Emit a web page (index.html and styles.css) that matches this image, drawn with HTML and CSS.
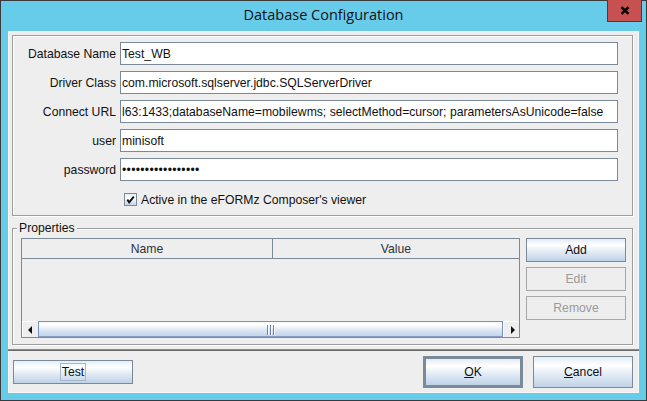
FILE: index.html
```html
<!DOCTYPE html>
<html lang="en">
<head>
<meta charset="utf-8">
<title>Database Configuration</title>
<link rel="stylesheet" href="styles.css">
</head>
<body>
<div class="window">
  <div class="titlebar">
    <div class="title">Database Configuration</div>
    <div class="close">
      <svg width="10" height="9" viewBox="0 0 10 9"><path d="M1.5 1.2 L8.5 7.8 M8.5 1.2 L1.5 7.8" stroke="#000" stroke-width="2.5" fill="none"/></svg>
    </div>
  </div>
  <div class="content">
    <div class="panel form-panel">
      <div class="form-grid">
        <div class="lbl">Database Name</div><div class="field">Test_WB</div>
        <div class="lbl">Driver Class</div><div class="field">com.microsoft.sqlserver.jdbc.SQLServerDriver</div>
        <div class="lbl">Connect URL</div><div class="field">l63:1433;databaseName=mobilewms; selectMethod=cursor; parametersAsUnicode=false</div>
        <div class="lbl">user</div><div class="field">minisoft</div>
        <div class="lbl">password</div><div class="field pw">•••••••••••••••••</div>
      </div>
      <div class="check-row">
        <div class="checkbox">
          <svg width="11" height="11" viewBox="0 0 11 11"><path d="M2.3 5.6 L4.2 8.4 L8.8 2.6" stroke="#111" stroke-width="1.9" fill="none"/></svg>
        </div>
        <span>Active in the eFORMz Composer's viewer</span>
      </div>
    </div>
    <div class="panel props-panel">
      <span class="panel-title">Properties</span>
      <div class="table">
        <div class="thead">
          <div class="th name">Name</div>
          <div class="th value">Value</div>
        </div>
        <div class="viewport"></div>
        <div class="hscroll">
          <div class="arrow"><span class="tri-left"></span></div>
          <div class="thumb"><span class="grip"></span><span class="grip"></span><span class="grip"></span></div>
          <div class="arrow"><span class="tri-right"></span></div>
        </div>
      </div>
      <div class="side">
        <div class="btn">Add</div>
        <div class="btn disabled">Edit</div>
        <div class="btn disabled">Remove</div>
      </div>
    </div>
    <div class="separator"></div>
    <div class="bottom-bar">
      <div class="btn test"><span class="focus">Test</span></div>
      <div class="spacer"></div>
      <div class="btn big default"><span><u>O</u>K</span></div>
      <div class="btn big"><span><u>C</u>ancel</span></div>
    </div>
  </div>
</div>
</body>
</html>
```

FILE: styles.css
```css
* { box-sizing: border-box; }
html, body { margin: 0; padding: 0; }
body {
  width: 647px;
  height: 401px;
  overflow: hidden;
  font-family: "Liberation Sans", Arial, sans-serif;
  font-size: 12.2px;
  color: #111111;
  background: #67cbea;
}
.window {
  width: 647px;
  height: 401px;
  border: 1px solid #3a3a3a;
  background: #67cbea;
  display: flex;
  flex-direction: column;
}
.titlebar {
  height: 30px;
  flex: none;
  display: grid;
  grid-template-columns: 1fr auto 1fr;
  align-items: start;
}
.title {
  grid-column: 2;
  font-family: "Open Sans", "Noto Sans", sans-serif;
  font-size: 14.5px;
  line-height: 28px;
  color: #111111;
  white-space: nowrap;
}
.close {
  grid-column: 3;
  justify-self: end;
  margin-top: -1px;
  margin-right: 4px;
  width: 35px;
  height: 22px;
  background: #c75050;
  border: 1px solid #473c3c;
  border-top: none;
  display: flex;
  align-items: center;
  justify-content: center;
}
.content {
  flex: 1;
  margin: 0 7px 7px;
  background: #eeeeee;
  box-shadow: inset 0 0 0 1px #f7f7f7;
  display: flex;
  flex-direction: column;
}
.panel {
  border: 1px solid #9d9d9d;
  box-shadow: inset 1px 1px 0 #ffffff, 1px 1px 0 #ffffff;
  margin: 0 6px 0 4px;
  flex: none;
}
.form-panel {
  margin-top: 4px;
  height: 181px;
  padding-top: 6px;
}
.form-grid {
  display: grid;
  grid-template-columns: 103px 498px;
  grid-auto-rows: 23px;
  column-gap: 4px;
  row-gap: 6px;
}
.lbl {
  text-align: right;
  line-height: 23px;
  padding-top: 1px;
  white-space: nowrap;
}
.field {
  background: #ffffff;
  border: 1px solid #7a8a99;
  padding: 0 2px 0 1px;
  line-height: 23px;
  height: 23px;
  white-space: nowrap;
  overflow: hidden;
}
.field.pw { letter-spacing: 0.3px; }
.check-row {
  display: flex;
  align-items: center;
  gap: 4px;
  margin-top: 12px;
  padding-left: 111px;
  height: 13px;
}
.checkbox {
  width: 13px;
  height: 13px;
  border: 1px solid #7a8a99;
  background: linear-gradient(#e6eef7, #ffffff 35%, #c4d5ea);
  display: flex;
  align-items: center;
  justify-content: center;
}
.props-panel {
  position: relative;
  margin-top: 12px;
  height: 117px;
  padding: 9px 0 0 8px;
  display: flex;
  align-items: flex-start;
  gap: 6px;
}
.panel-title {
  position: absolute;
  left: 4px;
  top: -8px;
  padding: 0 2px;
  background: #eeeeee;
  line-height: 14px;
}
.table {
  width: 499px;
  height: 100px;
  border: 1px solid #7a8a99;
  display: flex;
  flex-direction: column;
}
.thead {
  display: flex;
  height: 20px;
  flex: none;
  border-bottom: 1px solid #7a8a99;
}
.th {
  line-height: 19px;
  padding-top: 1px;
  text-align: center;
  color: #2c3340;
}
.th.name { width: 251px; border-right: 1px solid #7a8a99; }
.th.value { flex: 1; }
.viewport { flex: 1; }
.hscroll {
  height: 16px;
  flex: none;
  display: flex;
}
.arrow {
  width: 16px;
  background: #eeeeee;
  border-top: 1px solid #ffffff;
  border-left: 1px solid #ffffff;
  display: flex;
  align-items: center;
  justify-content: center;
}
.tri-left {
  width: 0; height: 0;
  border-top: 4px solid transparent;
  border-bottom: 4px solid transparent;
  border-right: 4px solid #111;
  margin-right: 2px;
}
.tri-right {
  width: 0; height: 0;
  border-top: 4px solid transparent;
  border-bottom: 4px solid transparent;
  border-left: 4px solid #111;
  margin-left: 2px;
}
.thumb {
  flex: 1;
  border: 1px solid #7590c4;
  border-bottom-color: #8a9cc0;
  background: linear-gradient(#f4f8fc, #ffffff 22%, #dde8f3 55%, #c3d4ea);
  display: flex;
  align-items: center;
  justify-content: center;
  gap: 1px;
}
.grip {
  width: 2px;
  height: 10px;
  border-left: 1px solid #6a80b8;
  border-right: 1px solid #ffffff;
  margin-top: 2px;
}
.side {
  display: flex;
  flex-direction: column;
  gap: 5px;
}
.btn {
  width: 100px;
  height: 24px;
  border: 1px solid #7a8a99;
  background: linear-gradient(#e4ecf6 0%, #ffffff 28%, #e2ebf5 58%, #bfd2e8 100%);
  display: flex;
  align-items: center;
  justify-content: center;
  color: #111111;
  flex: none;
}
.btn.disabled {
  background: #eeeeee;
  border-color: #a8a8a8;
  color: #9a9a9a;
}
.separator {
  margin-top: 4px;
  height: 2px;
  flex: none;
  border-top: 1px solid #8a8a8a;
  border-bottom: 1px solid #6c6c6c;
}
.bottom-bar {
  flex: 1;
  display: flex;
  align-items: center;
  padding: 0 6px 0 5px;
}
.btn.test { width: 120px; height: 24px; }
.focus {
  border: 1px solid #a3b8cc;
  padding: 0 1px;
  line-height: 16px;
}
.spacer { flex: 1; }
.btn.big { width: 100px; height: 32px; }
.btn.default { border: 3px solid #7a8a99; }
.btn.big + .btn.big { margin-left: 10px; }
```
